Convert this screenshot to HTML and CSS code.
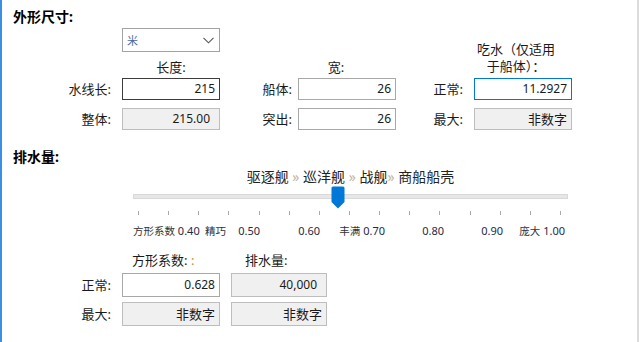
FILE: index.html
```html
<!DOCTYPE html>
<html lang="zh-CN">
<head>
  <meta charset="UTF-8">
  <title>外形尺寸</title>
  <link rel="stylesheet" href="styles.css">
</head>
<body>

<div class="panel">
  <h2 class="section-title">外形尺寸:</h2>

  <div class="dims">
    <div class="unit-select c2 r1">
      <span class="unit">米</span>
      <svg width="11" height="7" viewBox="0 0 11 7"><path d="M0.5 0.8 L5.5 5.8 L10.5 0.8" fill="none" stroke="#555" stroke-width="1.1"/></svg>
    </div>
    <div class="col-head c2 r2">长度:</div>
    <div class="col-head head-beam c4 r2">宽:</div>
    <div class="col-head head-draft c6 r12">
      <div>吃水（仅适用</div>
      <div>于船体）：</div>
    </div>

    <label class="field-label r3">水线长:</label>
    <div class="box dark r3">215</div>
    <label class="field-label narrow r3">船体:</label>
    <div class="box r3">26</div>
    <label class="field-label r3">正常:</label>
    <div class="box focus r3">11.2927</div>

    <label class="field-label r4">整体:</label>
    <div class="box off pad-r r4">215.00</div>
    <label class="field-label narrow r4">突出:</label>
    <div class="box r4">26</div>
    <label class="field-label r4">最大:</label>
    <div class="box off r4">非数字</div>
  </div>

  <h2 class="section-title disp-title">排水量:</h2>

  <div class="slider">
    <div class="slider-caption">驱逐舰 <span class="sep">»</span> 巡洋舰 <span class="sep">»</span> 战舰<span class="sep">»</span> 商船船壳</div>
    <div class="track">
      <svg class="thumb" width="14" height="23" viewBox="0 0 14 23"><path d="M0.5 2 Q0.5 0.5 2 0.5 H12 Q13.5 0.5 13.5 2 V16 L7 22.5 L0.5 16 Z" fill="#0078d7"/></svg>
    </div>
    <div class="ticks">
      <i></i><i></i><i></i><i></i><i></i><i></i><i></i><i></i><i></i><i></i><i></i><i></i><i></i><i></i><i></i>
    </div>
    <div class="tick-labels">
      <span><small>方形系数</small> 0.40</span>
      <span class="split"><small>精巧</small> 0.50</span>
      <span>0.60</span>
      <span><small>丰满</small> 0.70</span>
      <span>0.80</span>
      <span>0.90</span>
      <span><small>庞大</small> 1.00</span>
    </div>
  </div>

  <div class="disp">
    <div></div>
    <div class="disp-head">方形系数: <span class="dim-colon">:</span></div>
    <div class="disp-head second">排水量:</div>

    <label class="field-label">正常:</label>
    <div class="box tall">0.628</div>
    <div class="box tall off pad-r">40,000</div>

    <label class="field-label">最大:</label>
    <div class="box tall off">非数字</div>
    <div class="box tall off">非数字</div>
  </div>
</div>

</body>
</html>
```

FILE: styles.css
```css
body {
  margin: 0;
  background: white;
  color: #1a1a1a;
  font-family: "Noto Sans", "Noto Sans CJK SC", sans-serif;
  font-size: 13px;
}
.panel {
  box-sizing: border-box;
  width: 639px;
  height: 342px;
  border-left: 2px solid #3b8fe3;
  border-right: 2px solid #dcdcdc;
  padding: 10px 0 0 11px;
}
.section-title {
  margin: 0;
  font-size: 14px;
  line-height: 14px;
  font-weight: bold;
  color: #000;
}
.disp-title {
  margin-top: 20px;
}

/* top grid */
.dims {
  display: grid;
  grid-template-columns: 109px 98px 78px 98px 78px 98px;
  grid-template-rows: 24px 26px 22px 30px;
  margin-top: 4px;
}
.c2 { grid-column: 2; }
.c4 { grid-column: 4; }
.c6 { grid-column: 6; }
.r1 { grid-row: 1; }
.r2 { grid-row: 2; }
.r12 { grid-row: 1 / 3; }
.r3 { grid-row: 3; }
.r4 { grid-row: 4; }

.unit-select {
  box-sizing: border-box;
  display: flex;
  align-items: center;
  justify-content: space-between;
  border: 1px solid #a3a3a3;
  background: white;
  padding: 0 5px 0 4px;
}
.unit {
  font-size: 11px;
  color: #4a6a9a;
}
.col-head {
  align-self: end;
  text-align: center;
  line-height: 14px;
  padding-bottom: 4px;
}
.head-beam {
  padding-right: 22px;
}
.head-draft {
  line-height: 17px;
  padding-right: 14px;
  padding-bottom: 3px;
}
.field-label {
  align-self: end;
  height: 22px;
  line-height: 22px;
  text-align: right;
  padding-right: 11px;
}
.field-label.narrow {
  padding-right: 6px;
}
.box {
  box-sizing: border-box;
  align-self: end;
  height: 22px;
  line-height: 20px;
  border: 1px solid #a8a8a8;
  background: white;
  text-align: right;
  padding-right: 4px;
  font-size: 12px;
}
.box.dark {
  border-color: #3c3c3c;
}
.box.focus {
  border-color: #0078d7;
}
.box.off {
  background: #f0f0f0;
  border-color: #bdbdbd;
  font-size: 13px;
}
.box.pad-r {
  font-size: 12px;
  padding-right: 9px;
}
.box.tall {
  height: 24px;
  line-height: 22px;
}

/* slider */
.slider {
  width: 435px;
  margin: 5px 0 0 120px;
}
.slider-caption {
  text-align: center;
  font-size: 14px;
  line-height: 16px;
  color: #222;
}
.sep {
  color: #c4b49c;
  font-size: 14px;
}
.track {
  position: relative;
  box-sizing: border-box;
  height: 5px;
  margin-top: 9px;
  background: #e7e7e7;
  border: 1px solid #d9d9d9;
}
.thumb {
  position: absolute;
  left: 197px;
  top: -9px;
}
.ticks {
  display: flex;
  justify-content: space-between;
  margin: 12px 7px 0 5px;
  height: 4px;
}
.ticks i {
  width: 1px;
  background: #a8a8a8;
}
.tick-labels {
  display: grid;
  grid-template-columns: 66px 61px 60px 65px 59px 59px 62px;
  margin-top: 9px;
  font-size: 11px;
  line-height: 14px;
  color: #1f2a44;
}
.tick-labels span {
  text-align: right;
  white-space: nowrap;
}
.tick-labels span:first-child {
  text-align: left;
}
.tick-labels .split {
  display: flex;
  justify-content: space-between;
  padding-left: 6px;
}
.tick-labels small {
  font-size: 10.5px;
  color: #333;
}

/* displacement */
.disp {
  display: grid;
  grid-template-columns: 98px 98px 96px;
  column-gap: 11px;
  grid-template-rows: 16px 24px 24px;
  row-gap: 5px;
  margin-top: 14px;
}
.disp-head {
  line-height: 16px;
  padding-left: 10px;
}
.disp-head.second {
  padding-left: 14px;
}
.disp .field-label {
  height: 24px;
  line-height: 24px;
  padding-right: 0;
}
.dim-colon {
  color: #c98a3c;
}
```
